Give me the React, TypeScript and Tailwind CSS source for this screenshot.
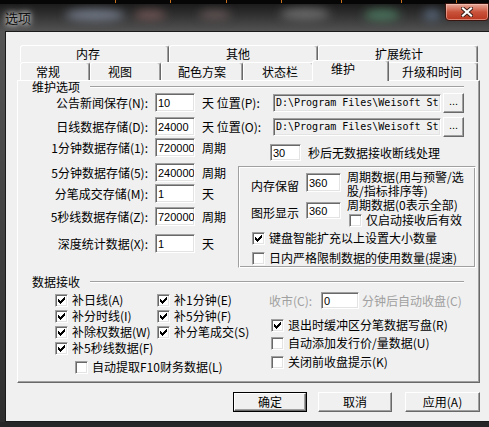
import type { ReactNode } from 'react';

function Check({ on }: { on?: boolean }) {
  return (
    <span className="flex h-[13px] w-[13px] shrink-0 items-center justify-center border border-t-[#a0a0a0] border-l-[#a0a0a0] border-r-white border-b-white bg-white shadow-[inset_1px_1px_0_#696969,inset_-1px_-1px_0_#e3e3e3]">
      {on && (
        <svg width="7" height="7" viewBox="0 0 7 7" shapeRendering="crispEdges">
          <path d="M6 0h1v1H6zM5 1h2v1H5zM0 2h1v1H0zM4 2h3v1H4zM0 3h2v1H0zM3 3h3v1H3zM0 4h5v1H0zM1 5h3v1H1zM2 6h1v1H2z" fill="#000" />
        </svg>
      )}
    </span>
  );
}

function CheckItem({ on, label, className = '' }: { on?: boolean; label: string; className?: string }) {
  return (
    <div className={`flex h-[14px] items-center whitespace-nowrap ${className}`}>
      <Check on={on} />
      <span className="ml-[4px]">{label}</span>
    </div>
  );
}

// sunken edit box
function Field({ value, className }: { value: string; className: string }) {
  return (
    <div className={`flex shrink-0 items-center overflow-hidden whitespace-nowrap border border-t-[#a0a0a0] border-l-[#a0a0a0] border-r-white border-b-white pl-[2px] shadow-[inset_1px_1px_0_#696969,inset_-1px_-1px_0_#e3e3e3] ${className}`}>
      {value}
    </div>
  );
}

function Raised({ children, className }: { children: ReactNode; className: string }) {
  return (
    <div className={`flex items-center justify-center border border-t-white border-l-white border-r-[#696969] border-b-[#696969] bg-[#f0f0f0] shadow-[inset_-1px_-1px_0_#a0a0a0] ${className}`}>
      {children}
    </div>
  );
}

function GroupHeader({ label, className = '' }: { label: string; className?: string }) {
  return (
    <div className={`flex h-[12px] items-center pl-[14px] pr-[15px] ${className}`}>
      <span>{label}</span>
      <div className="ml-[10px] h-[2px] flex-1 border-t border-t-[#a0a0a0] border-b border-b-white" />
    </div>
  );
}

function Tab({ label, className }: { label: string; className: string }) {
  return (
    <div className={`flex h-full shrink-0 items-center rounded-t-[3px] border-t border-l border-t-white border-l-white border-r border-r-[#696969] bg-[#f0f0f0] shadow-[inset_-1px_0_0_#a0a0a0] ${className}`}>
      {label}
    </div>
  );
}

function StoreRow({ label, value, unit, className }: { label: string; value: string; unit: string; className: string }) {
  return (
    <div className={`flex h-[19px] items-center whitespace-nowrap ${className}`}>
      <span className="w-[130px] text-right">{label}</span>
      <Field value={value} className="ml-[7px] h-full w-[40px] bg-white font-['Liberation_Sans',sans-serif] text-[11px]" />
      <span className="ml-[7px]">{unit}</span>
    </div>
  );
}

function PathRow({ label, value, unit, path, className }: { label: string; value: string; unit: string; path: string; className: string }) {
  return (
    <div className={`flex h-[19px] items-center whitespace-nowrap ${className}`}>
      <span className="w-[130px] text-right">{label}</span>
      <Field value={value} className="ml-[7px] h-full w-[40px] bg-white font-['Liberation_Sans',sans-serif] text-[11px]" />
      <span className="ml-[7px] w-[71px]">{unit}</span>
      <Field value={path} className="h-[18px] w-[168px] bg-[#f0f0f0] font-['DejaVu_Sans_Mono',monospace] text-[10px]" />
      <Raised className="ml-[2px] h-[20px] w-[21px] pb-[4px] font-['Liberation_Sans',sans-serif] text-[11px]">...</Raised>
    </div>
  );
}

function TitleBar() {
  const ticks = [115, 170, 226, 281, 341, 401, 456];
  return (
    <div className="relative h-[31px] overflow-hidden">
      <svg className="absolute left-0 top-0" width="489" height="31">
        <defs>
          <filter id="blur" x="-50%" y="-50%" width="200%" height="200%">
            <feGaussianBlur stdDeviation="5" />
          </filter>
          <linearGradient id="tb" x1="0" y1="0" x2="0" y2="1">
            <stop offset="0" stopColor="#141414" />
            <stop offset="0.45" stopColor="#2f2f2f" />
            <stop offset="1" stopColor="#525252" />
          </linearGradient>
        </defs>
        <rect width="489" height="31" fill="url(#tb)" />
        <g filter="url(#blur)" opacity="0.85">
          <ellipse cx="95" cy="15" rx="30" ry="6" fill="#7c8494" />
          <ellipse cx="150" cy="15" rx="16" ry="5" fill="#7a5a5a" />
          <ellipse cx="215" cy="15" rx="16" ry="5" fill="#6a5a5a" />
          <ellipse cx="305" cy="14" rx="25" ry="6" fill="#747474" />
          <ellipse cx="382" cy="15" rx="18" ry="6" fill="#4e7d62" />
          <ellipse cx="432" cy="15" rx="9" ry="6" fill="#5a6a80" />
        </g>
        <rect width="489" height="4" fill="#060606" />
        {ticks.map((x) => (
          <rect key={x} x={x} y="0" width="1" height="3" fill="#c8701e" />
        ))}
      </svg>
      <div className="relative flex h-full">
        <span className="ml-[5px] mt-[11px] text-[13px] leading-[13px] text-[#111] [text-shadow:0_0_5px_#fff,0_0_9px_#ddd]">选项</span>
        <div className="ml-auto mt-[3px] flex h-[18px] w-[44px] items-center justify-center rounded-b-[4px] border border-[#3a1510] bg-gradient-to-b from-[#e6a99a] via-[#c9523b] to-[#b8361f] shadow-[inset_0_0_0_1px_rgba(255,210,200,0.5)]">
          <svg width="12" height="10" viewBox="0 0 12 10">
            <path d="M2 1.5L10 8.5M10 1.5L2 8.5" stroke="#3a1a14" strokeWidth="4" strokeLinecap="square" />
            <path d="M2 1.5L10 8.5M10 1.5L2 8.5" stroke="#fff" strokeWidth="2.2" strokeLinecap="square" />
          </svg>
        </div>
      </div>
    </div>
  );
}

export default function App() {
  return (
    <div className="h-[427px] w-[489px] select-none overflow-hidden bg-[#222] font-['Noto_Sans_CJK_SC',sans-serif] text-[12px] leading-[12px] text-black">
      <TitleBar />
      <div className="flex h-[391px]">
        <div className="w-[5px] bg-gradient-to-b from-[#555] to-[#2e2e2e]" />
        <div className="flex-1 border-l border-t border-b border-[#1a1a1a] bg-[#f0f0f0]">
          {/* tab headers */}
          <div className="ml-[14px] mt-[13px] flex h-[17px]">
            <Tab label="内存" className="w-[149px] pl-[55px]" />
            <Tab label="其他" className="w-[149px] pl-[56px]" />
            <Tab label="扩展统计" className="w-[160px] pl-[56px]" />
          </div>
          <div className="relative z-10 ml-[14px] flex h-[18px] items-end">
            <Tab label="常规" className="w-[70px] pl-[15px]" />
            <Tab label="视图" className="w-[71px] pl-[17px]" />
            <Tab label="配色方案" className="w-[82px] pl-[16px]" />
            <Tab label="状态栏" className="w-[71px] pl-[18px]" />
            <div className="relative z-10 -mx-[2px] -mb-px flex h-[21px] w-[77px] shrink-0 items-start rounded-t-[3px] border-t border-l border-t-white border-l-white border-r border-r-[#696969] bg-[#f0f0f0] pl-[18px] pt-[2px] shadow-[inset_-1px_0_0_#a0a0a0]">
              维护
            </div>
            <Tab label="升级和时间" className="w-[91px] pl-[14px]" />
          </div>

          {/* tab page */}
          <div className="ml-[11px] flex h-[303px] w-[463px] flex-col border border-t-white border-l-white border-r-[#696969] border-b-[#696969] shadow-[inset_-1px_-1px_0_#a0a0a0]">
            <GroupHeader label="维护选项" />
            <PathRow label="公告新闻保存(N):" value="10" unit="天 位置(P):" path={'D:\\Program Files\\Weisoft St'} className="" />
            <PathRow label="日线数据存储(D):" value="24000" unit="天 位置(O):" path={'D:\\Program Files\\Weisoft St'} className="mt-[5px]" />

            <div className="flex">
              <div className="flex w-[220px] flex-col">
                <StoreRow label="1分钟数据存储(1):" value="720000" unit="周期" className="mt-[2px]" />
                <StoreRow label="5分钟数据存储(5):" value="240000" unit="周期" className="mt-[6px]" />
                <StoreRow label="分笔成交存储(M):" value="1" unit="天" className="mt-[2px]" />
                <StoreRow label="5秒线数据存储(Z):" value="720000" unit="周期" className="mt-[4px]" />
                <StoreRow label="深度统计数据(X):" value="1" unit="天" className="mt-[8px]" />
              </div>
              <div className="flex flex-col">
                <div className="ml-[32px] mt-[8px] flex h-[17px] items-center whitespace-nowrap">
                  <Field value="30" className="h-full w-[31px] bg-white font-['Liberation_Sans',sans-serif] text-[11px]" />
                  <span className="ml-[7px]">秒后无数据接收断线处理</span>
                </div>
                <div className="mt-[5px] h-[102px] w-[238px] border border-t-[#a0a0a0] border-l-[#a0a0a0] border-r-white border-b-white shadow-[inset_1px_1px_0_#fff,inset_-1px_-1px_0_#a0a0a0]">
                  <div className="flex pl-[12px]">
                    <div className="flex w-[90px] flex-col">
                      <div className="mt-[6px] flex h-[19px] items-end">
                        <span className="w-[55px]">内存保留</span>
                        <Field value="360" className="h-full w-[35px] bg-white font-['Liberation_Sans',sans-serif] text-[11px]" />
                      </div>
                      <div className="mt-[10px] flex h-[17px] items-end">
                        <span className="w-[55px]">图形显示</span>
                        <Field value="360" className="h-full w-[35px] bg-white font-['Liberation_Sans',sans-serif] text-[11px]" />
                      </div>
                    </div>
                    <div className="ml-[6px] mt-[3px] flex flex-col whitespace-nowrap leading-[14px]">
                      <span>周期数据(用与预警/选</span>
                      <span>股/指标排序等)</span>
                      <span>周期数据(0表示全部)</span>
                      <CheckItem label="仅启动接收后有效" className="ml-[2px] mt-px" />
                    </div>
                  </div>
                  <CheckItem on label="键盘智能扩充以上设置大小数量" className="ml-[13px] mt-[4px]" />
                  <CheckItem label="日内严格限制数据的使用数量(提速)" className="ml-[13px] mt-[6px]" />
                </div>
              </div>
            </div>

            <GroupHeader label="数据接收" className="mt-[8px]" />
            <div className="flex">
              <div className="flex w-[251px] shrink-0 flex-col pl-[37px]">
                <div className="mt-[4px] grid grid-cols-[102px_auto]">
                  <CheckItem on label="补日线(A)" className="h-[16px]" />
                  <CheckItem on label="补1分钟(E)" className="h-[16px]" />
                  <CheckItem on label="补分时线(I)" className="h-[16px]" />
                  <CheckItem on label="补5分钟(F)" className="h-[16px]" />
                  <CheckItem on label="补除权数据(W)" className="h-[16px]" />
                  <CheckItem on label="补分笔成交(S)" className="h-[16px]" />
                  <CheckItem on label="补5秒线数据(F)" className="h-[16px]" />
                </div>
                <CheckItem label="自动提取F10财务数据(L)" className="ml-[20px] mt-[4px]" />
              </div>
              <div className="flex flex-col">
                <div className="mt-[4px] flex h-[17px] items-center whitespace-nowrap text-[#a0a0a0]">
                  <span className="w-[52px]">收市(C):</span>
                  <Field value="0" className="h-full w-[38px] bg-white font-['Liberation_Sans',sans-serif] text-[11px] text-black" />
                  <span className="ml-[3px]">分钟后自动收盘(C)</span>
                </div>
                <CheckItem on label="退出时缓冲区分笔数据写盘(R)" className="ml-[2px] mt-[9px]" />
                <CheckItem label="自动添加发行价/量数据(U)" className="ml-[2px] mt-[4px]" />
                <CheckItem label="关闭前收盘提示(K)" className="ml-[2px] mt-[5px]" />
              </div>
            </div>
          </div>

          {/* dialog buttons */}
          <div className="ml-[227px] mt-[9px] flex h-[20px]">
            <div className="flex h-full w-[74px] border border-black">
              <Raised className="h-full flex-1">确定</Raised>
            </div>
            <Raised className="ml-[11px] h-full w-[74px]">取消</Raised>
            <Raised className="ml-[13px] h-full w-[75px]">应用(A)</Raised>
          </div>
        </div>
      </div>
      <div className="h-[5px] bg-[#262626]" />
    </div>
  );
}
